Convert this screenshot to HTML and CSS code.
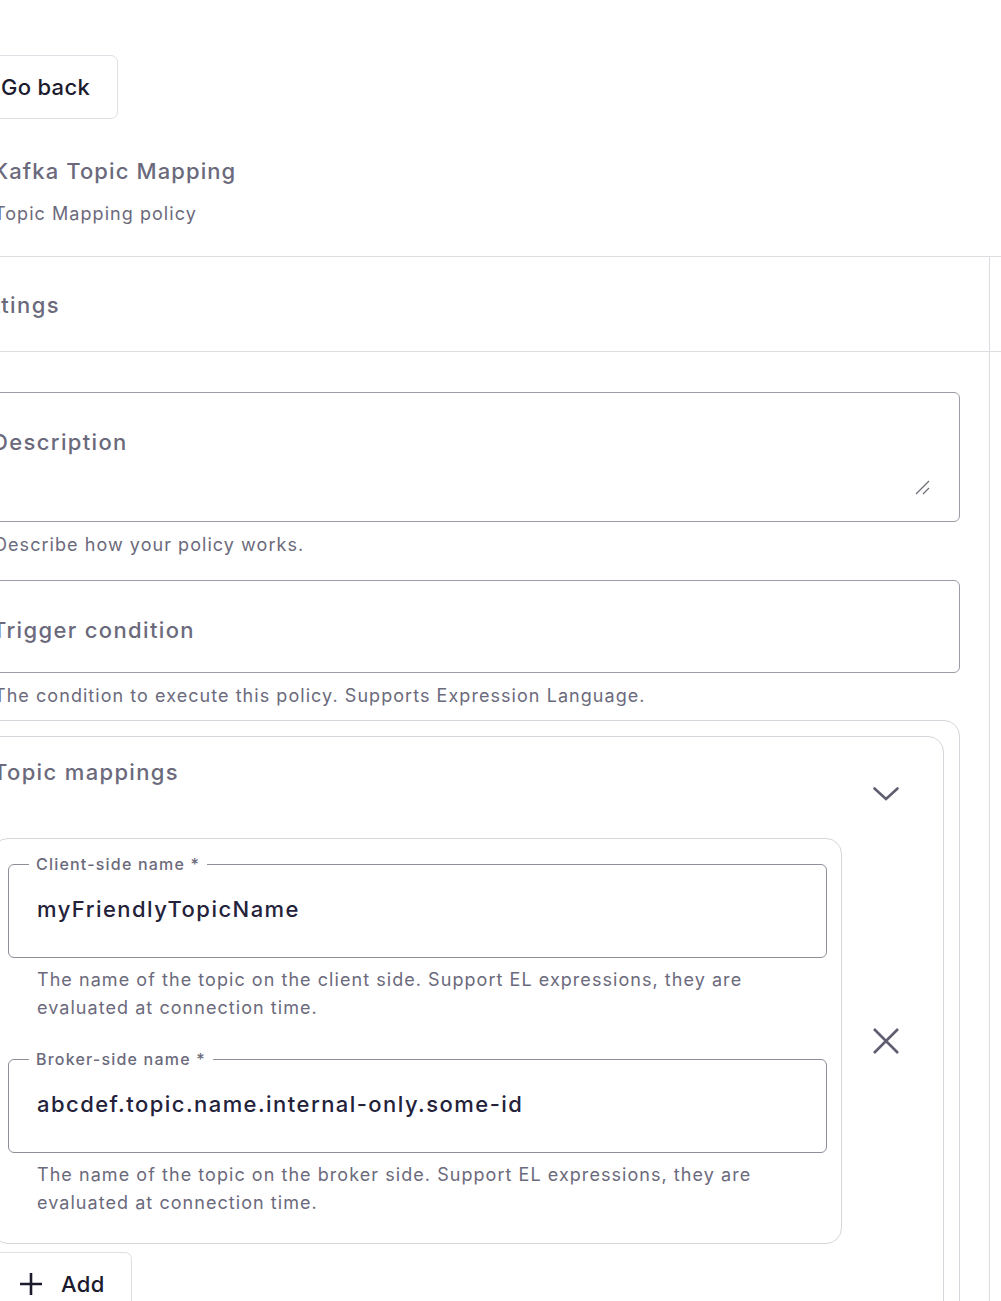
FILE: index.html
```html
<!DOCTYPE html>
<html lang="en">
<head>
<meta charset="utf-8">
<title>Kafka Topic Mapping</title>
<link rel="stylesheet" href="styles.css">
</head>
<body>
<div class="page">
  <header class="head">
    <button class="btn go-back" type="button">Go back</button>
    <h1 class="title">Kafka Topic Mapping</h1>
    <p class="subtitle">Topic Mapping policy</p>
  </header>

  <div class="layout">
    <section class="main">
      <div class="tabbar"><span class="tab">Settings</span></div>
      <div class="form">
        <div class="outline area">
          <span class="flabel">Description</span>
          <svg class="resizer" width="15" height="15" viewBox="0 0 15 15"><path d="M1 14 L14 1 M8 14 L14 8" stroke="#6f6e78" stroke-width="1.3" fill="none"/></svg>
        </div>
        <div class="hint">Describe how your policy works.</div>

        <div class="outline input">
          <span class="flabel">Trigger condition</span>
        </div>
        <div class="hint">The condition to execute this policy. Supports Expression Language.</div>

        <div class="outer">
          <div class="inner">
            <div class="mapgrid">
              <div class="maptitle">Topic mappings</div>
              <div class="chev">
                <svg width="28" height="16" viewBox="0 0 28 16"><path d="M2.5 2.5 L14 13 L25.5 2.5" stroke="#5f5e71" stroke-width="2.6" fill="none" stroke-linecap="round"/></svg>
              </div>

              <div class="card">
                <div class="field">
                  <span class="legend">Client-side name *</span>
                  <div class="value">myFriendlyTopicName</div>
                </div>
                <div class="fhint">The name of the topic on the client side. Support EL expressions, they are evaluated at connection time.</div>

                <div class="field second">
                  <span class="legend">Broker-side name *</span>
                  <div class="value">abcdef.topic.name.internal-only.some-id</div>
                </div>
                <div class="fhint">The name of the topic on the broker side. Support EL expressions, they are evaluated at connection time.</div>
              </div>
              <div class="remove">
                <svg width="28" height="28" viewBox="0 0 28 28"><path d="M2 2 L26 26 M26 2 L2 26" stroke="#5f5e71" stroke-width="2.6" fill="none"/></svg>
              </div>

              <button class="btn add" type="button">
                <svg width="22" height="22" viewBox="0 0 22 22"><path d="M11 0 V22 M0 11 H22" stroke="#1c1b2e" stroke-width="2.6" fill="none"/></svg>
                <span>Add</span>
              </button>
            </div>
          </div>
        </div>
      </div>
    </section>
    <aside class="side">
      <div class="sidehead"></div>
    </aside>
  </div>
</div>
</body>
</html>
```

FILE: styles.css
```css
* { box-sizing: border-box; }
html, body { margin: 0; padding: 0; background: #ffffff; }
body {
  font-family: Inter, "Noto Sans", sans-serif;
  width: 1001px;
  height: 1301px;
  overflow: hidden;
}
.page { margin-left: -40px; }

.head {
  display: flex;
  flex-direction: column;
  align-items: flex-start;
  padding: 55px 0 28px 0;
}
.btn {
  display: inline-flex;
  align-items: center;
  height: 64px;
  border: 1px solid #dedee4;
  border-radius: 7px;
  background: #fff;
  font: 500 22px/32px Inter, sans-serif;
  letter-spacing: 0.3px;
  color: #1c1b2e;
  padding: 0 27px;
  margin: 0;
}
.go-back { margin-left: 13px; }
.title {
  margin: 36px 0 0 33px;
  font: 500 22px/32px Inter, sans-serif;
  letter-spacing: 1.1px;
  color: #6b6a7c;
}
.subtitle {
  margin: 13px 0 0 34px;
  font: 400 18px/28px Inter, sans-serif;
  letter-spacing: 1.05px;
  color: #6b6a7c;
}

.layout {
  display: grid;
  grid-template-columns: 1030px 1fr;
  border-top: 1px solid #dcdce1;
}
.main { border-right: 1px solid #dcdce1; }
.tabbar, .sidehead {
  height: 95px;
  border-bottom: 1px solid #dcdce1;
}
.tabbar {
  display: flex;
  align-items: center;
  padding: 1px 0 0 3px;
}
.tab {
  font: 500 22px/32px Inter, sans-serif;
  letter-spacing: 1.4px;
  color: #6b6a7c;
}

.form { padding: 40px 29px 0 0; }
.outline {
  position: relative;
  border: 1px solid #9d9ca6;
  border-radius: 6px;
  padding: 33px 0 0 31px;
}
.area { height: 130px; }
.input { height: 93px; margin-top: 21px; }
.flabel {
  display: block;
  font: 500 22px/32px Inter, sans-serif;
  letter-spacing: 1.35px;
  color: #6b6a7c;
}
.resizer { position: absolute; right: 29px; bottom: 26px; }
.hint {
  margin-top: 9px;
  padding-left: 34px;
  font: 400 18px/28px Inter, sans-serif;
  letter-spacing: 1.05px;
  color: #6b6a7c;
}

.outer {
  margin-top: 10px;
  border: 1px solid #d6d6dd;
  border-radius: 16px;
  padding: 15px;
  height: 700px;
}
.inner {
  border: 1px solid #d6d6dd;
  border-radius: 16px;
  padding: 19px 14px 15px 15px;
  height: 700px;
}
.mapgrid {
  display: grid;
  grid-template-columns: 1fr 87px;
}
.maptitle {
  margin: 0 0 50px 1px;
  font: 500 22px/32px Inter, sans-serif;
  letter-spacing: 1.35px;
  color: #6b6a7c;
}
.chev { justify-self: center; margin-top: 30px; line-height: 0; }

.card {
  border: 1px solid #d6d6dd;
  border-radius: 16px;
  padding: 25px 14px 26px 15px;
}
.field {
  position: relative;
  height: 94px;
  border: 1px solid #8f8e99;
  border-radius: 6px;
  padding: 28px 0 0 28px;
}
.field.second { margin-top: 37px; }
.legend {
  position: absolute;
  top: -12px;
  left: 20px;
  padding: 0 7px;
  background: #fff;
  font: 500 16px/22px Inter, sans-serif;
  letter-spacing: 1.2px;
  color: #6b6a7c;
}
.value {
  font: 500 22px/32px Inter, sans-serif;
  letter-spacing: 1.45px;
  color: #23223a;
}
.fhint {
  margin-top: 8px;
  padding: 0 16px 0 29px;
  font: 400 18px/28px Inter, sans-serif;
  letter-spacing: 1.05px;
  color: #6b6a7c;
}
.remove { align-self: center; justify-self: center; line-height: 0; }

.add {
  justify-self: start;
  margin-top: 8px;
  padding: 0 26px 0 27px;
  gap: 19px;
}
.add svg { display: block; }
```
